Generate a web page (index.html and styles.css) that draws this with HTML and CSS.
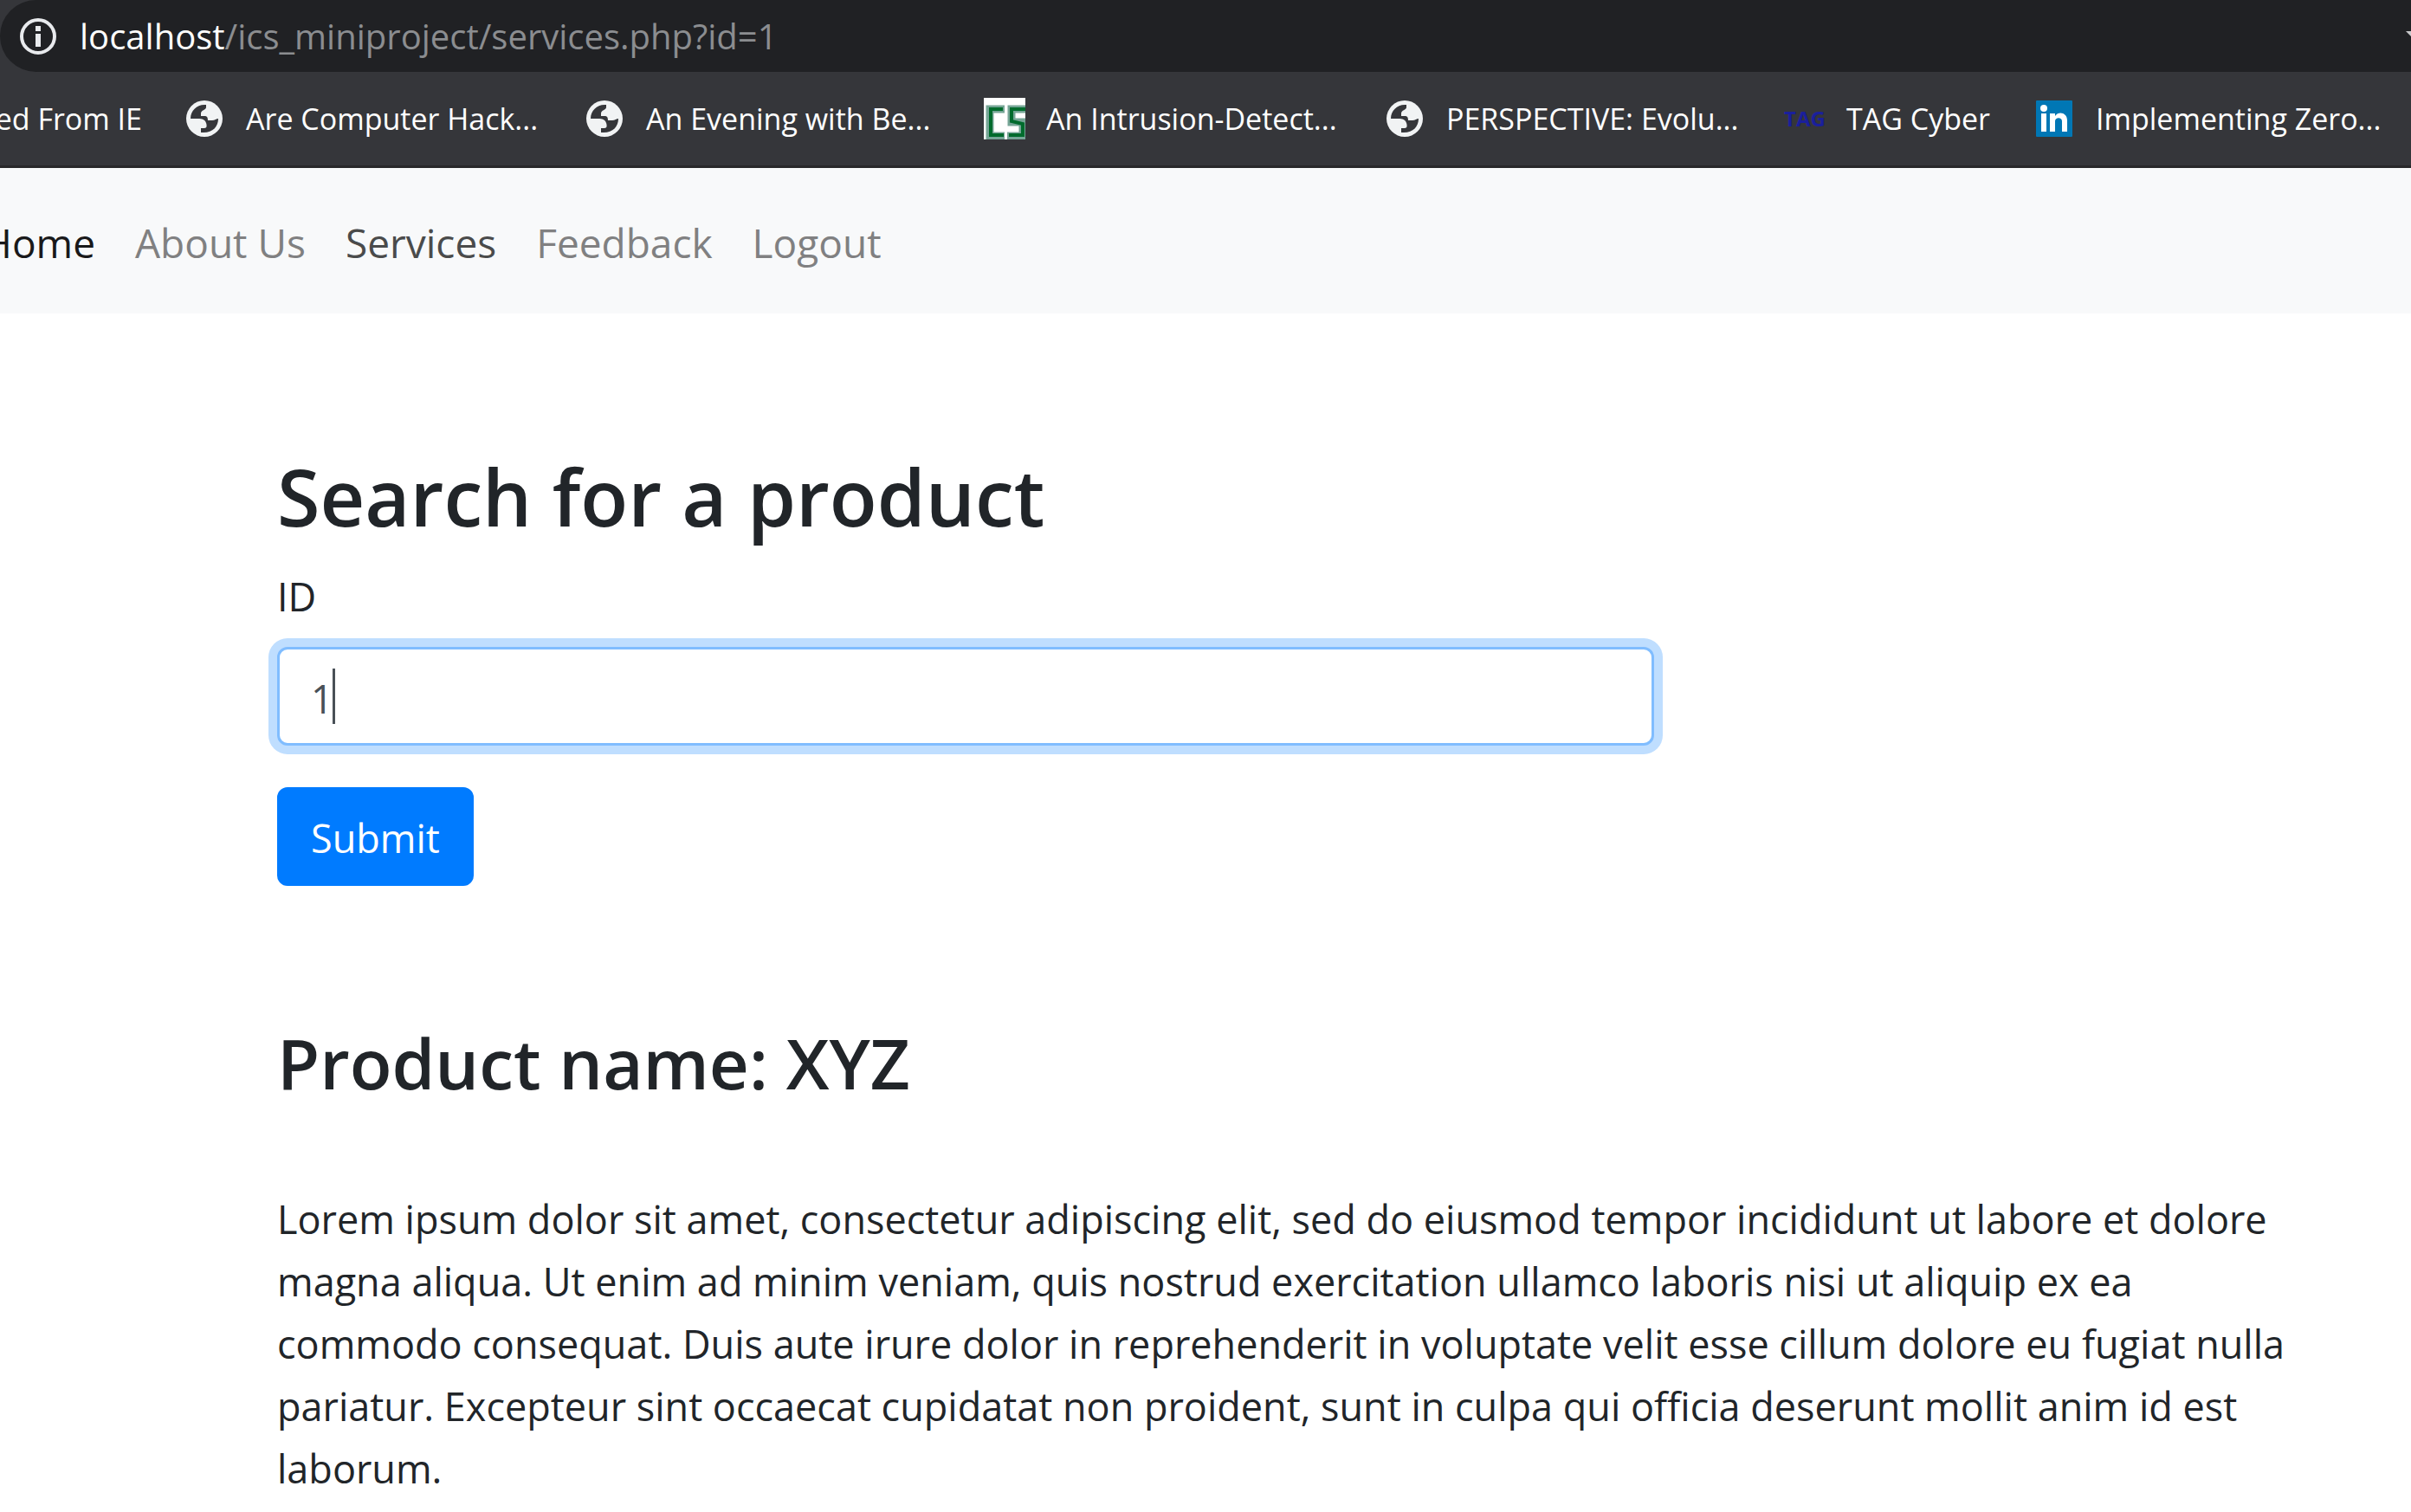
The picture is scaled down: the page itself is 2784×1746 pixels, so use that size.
FILE: index.html
```html
<!DOCTYPE html>
<html lang="en">
<head>
<meta charset="utf-8">
<title>Services</title>
<link rel="stylesheet" href="styles.css">
</head>
<body>
<svg class="sprite" aria-hidden="true">
  <symbol id="globe" viewBox="0 0 48 48">
    <circle cx="24" cy="24" r="21" fill="#f1f3f4"/>
    <path d="M8 24C8 15 15 8 24 8h2v3c0 3-6 3-6 7v3h5c3 0 3 4 3 5h5c3 0 5-2 7-2 0 9-6 16-17 16h-3v-5h4c3 0 3-3 2-6-1-4-5-5-9-5z" fill="#35363a"/>
  </symbol>
</svg>
<header class="browser">
  <div class="omnibox">
    <svg class="info" viewBox="0 0 42 42" aria-hidden="true"><circle cx="21" cy="21" r="19" fill="none" stroke="#e8eaed" stroke-width="4"/><path d="M18 9h6v6h-6zM18 18h6v15h-6z" fill="#e8eaed"/></svg>
    <div class="url"><span class="host">localhost</span>/ics_miniproject/services.php?id=1</div>
    <svg class="arrow" viewBox="0 0 6 12" aria-hidden="true"><path d="M0 0h6v6z" fill="#c8c9cb"/></svg>
  </div>
  <nav class="bookmarks" aria-label="Bookmarks">
    <a class="bookmark first" href="#"><span>ed From IE</span></a>
    <a class="bookmark" href="#"><svg class="icon"><use href="#globe"/></svg><span>Are Computer Hack...</span></a>
    <a class="bookmark" href="#"><svg class="icon"><use href="#globe"/></svg><span>An Evening with Be...</span></a>
    <a class="bookmark" href="#"><svg class="icon" viewBox="0 0 48 48"><path fill="#fff" d="M0 0h48v48H0z"/><path d="M24 13H7v31h17M48 13H32v15h13v16H27" fill="none" stroke="#76a596" stroke-width="9"/><path d="M22 13H8v30h15M48 13H32v14l13 3v13H29" fill="none" stroke="#006b2d" stroke-width="4"/></svg><span>An Intrusion-Detect...</span></a>
    <a class="bookmark" href="#"><svg class="icon"><use href="#globe"/></svg><span>PERSPECTIVE: Evolu...</span></a>
    <a class="bookmark short" href="#"><span class="icon tag">TAG</span><span>TAG Cyber</span></a>
    <a class="bookmark" href="#"><svg class="icon" viewBox="0 0 48 48"><rect x="3" y="3" width="42" height="42" rx="1" fill="#0077b5"/><circle cx="12" cy="12" r="4" fill="#fff"/><path d="M9 18h6v21H9zM19 18h6v3c4-6 14-4 14 5v13h-6V27c0-5-8-5-8 0v12h-6z" fill="#fff"/></svg><span>Implementing Zero...</span></a>
  </nav>
</header>
<nav class="navbar" aria-label="Main">
  <a class="home" href="#">Home</a>
  <a href="#">About Us</a>
  <a class="hover" href="#">Services</a>
  <a href="#">Feedback</a>
  <a href="#">Logout</a>
</nav>
<main class="content">
  <form class="search">
    <h2>Search for a product</h2>
    <label for="id">ID</label>
    <div class="field"><input id="id" type="text" value="1"><span class="caret"></span></div>
    <button type="button">Submit</button>
  </form>
  <section>
    <h3>Product name: XYZ</h3>
    <p>Lorem ipsum dolor sit amet, consectetur adipiscing elit, sed do eiusmod tempor incididunt ut labore et dolore magna aliqua. Ut enim ad minim veniam, quis nostrud exercitation ullamco laboris nisi ut aliquip ex ea commodo consequat. Duis aute irure dolor in reprehenderit in voluptate velit esse cillum dolore eu fugiat nulla pariatur. Excepteur sint occaecat cupidatat non proident, sunt in culpa qui officia deserunt mollit anim id est laborum.</p>
  </section>
</main>
</body>
</html>
```

FILE: styles.css
```css
* { box-sizing: border-box; }

body {
  margin: 0;
  background: #fff;
  color: #212529;
  font: 45px/72px "Open Sans", "Noto Sans", sans-serif;
  overflow-x: hidden;
}

a { color: inherit; text-decoration: none; }

.sprite { display: none; }

/* Browser chrome */
.browser {
  background: #35363a;
  border-bottom: 3px solid #28282a;
  overflow: hidden;
}

.omnibox {
  display: flex;
  align-items: center;
  height: 83px;
  padding-left: 23px;
  background: #202124;
  border-radius: 42px 0 0 42px;
}

.info { width: 42px; height: 42px; }

.url {
  flex: 1;
  margin-left: 27px;
  color: #8b8d90;
  font-size: 40px;
  white-space: nowrap;
}

.host { color: #fff; }

.arrow { width: 6px; height: 12px; }

.bookmarks {
  display: flex;
  align-items: center;
  gap: 48px;
  height: 108px;
  color: #fff;
  font-size: 34px;
  line-height: 48px;
  white-space: nowrap;
}

.bookmark {
  display: flex;
  flex: 0 0 414px;
  gap: 24px;
}

.bookmark.first {
  flex-basis: 164px;
  min-width: 0;
  justify-content: flex-end;
}

.bookmark.short { flex-basis: 240px; }

.icon { flex: none; width: 48px; height: 48px; }

.tag {
  color: #1a1f9c;
  font-size: 24px;
  font-weight: 700;
}

/* Site navigation */
.navbar {
  display: flex;
  gap: 46px;
  padding: 50px 0 46px;
  background: #f8f9fa;
  color: #808081;
  font-size: 46px;
  white-space: nowrap;
}

.home {
  display: flex;
  justify-content: flex-end;
  width: 110px;
  color: #19191a;
}

.hover { color: #4a4b4b; }

/* Page */
.content { padding: 150px 79px 0 320px; }

h2, h3 { margin: 0; font-weight: 600; }

h2 { margin-bottom: 16px; font-size: 90px; line-height: 123px; }

h3 { margin-bottom: 92px; font-size: 80px; line-height: 107px; }

label { display: block; padding-top: 2px; margin-bottom: 22px; }

.field {
  position: relative;
  width: 66.667%;
  margin-bottom: 48px;
}

input {
  display: block;
  width: 100%;
  height: 114px;
  padding: 20px 36px 16px;
  border: 3px solid #80bdff;
  border-radius: 12px;
  outline: none;
  box-shadow: 0 0 0 10px #bfdeff;
  color: #495057;
  font: inherit;
}

.caret {
  position: absolute;
  top: 25px;
  left: 64px;
  width: 3px;
  height: 64px;
  background: #495057;
}

button {
  display: block;
  height: 114px;
  margin-bottom: 150px;
  padding: 20px 36px 16px;
  border: 3px solid #007bff;
  border-radius: 12px;
  background: #007bff;
  color: #fff;
  font: inherit;
}

p { margin: 0; padding-right: 24px; }
```
